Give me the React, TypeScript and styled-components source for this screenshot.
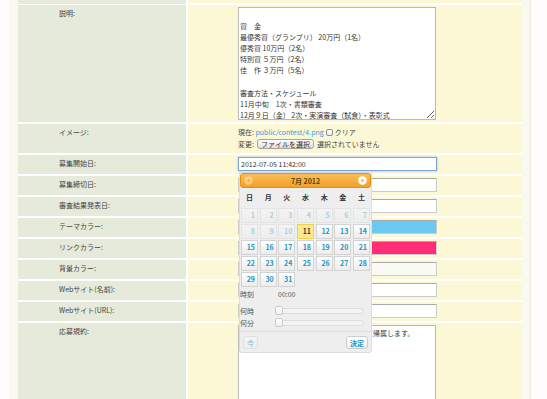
import React from "react";
import styled, { createGlobalStyle, css } from "styled-components";

const GlobalStyle = createGlobalStyle`
  html, body {
    margin: 0;
    padding: 0;
    overflow: hidden;
    background: #fefdfb;
  }
  body {
    font-family: "Noto Sans CJK JP", "Noto Sans", sans-serif;
    font-size: 7px;
    color: #444;
  }
`;

const Page = styled.div`
  margin-left: 9px;
  width: 522px;
  height: 399px;
  overflow: hidden;
  padding: 0 9px;
  box-sizing: border-box;
  background: #fbf8f1;
  border-right: 1px solid #f2ede4;
`;

const Table = styled.div`
  display: grid;
  grid-template-columns: 168px 334px;
  grid-template-rows: 3px 117px 29px repeat(8, 19px) 120px;
  gap: 2px;
  background: #ffffff;
  width: 504px;
`;

const Label = styled.div`
  background: #e6eada;
  padding: 4px 0 0 41px;
  line-height: 9px;
  color: #444;
  white-space: nowrap;
`;

const Value = styled.div`
  position: relative;
  background: #fcf8d6;
  padding: 2px 0 0 50px;
`;

const TextInput = styled.input<{ $fill?: string; $focus?: boolean }>`
  display: block;
  width: 199px;
  height: 14px;
  box-sizing: border-box;
  margin: 0;
  padding: 0 2px;
  border: 1px solid #cbcbcb;
  border-top-color: #aaaaaa;
  background: ${(p) => p.$fill || "#ffffff"};
  font-family: inherit;
  font-size: 7px;
  color: #333;
  outline: none;
  ${(p) =>
    p.$focus &&
    css`
      border-color: #7aa8d8;
      box-shadow: 0 0 2px #8cbbe9;
    `}
`;

const TextArea = styled.textarea<{ $h: number }>`
  display: block;
  width: 198px;
  height: ${(p) => p.$h}px;
  box-sizing: border-box;
  margin: 0;
  padding: 2px 1px 0;
  border: 1px solid #b9b9b9;
  background: #fff;
  font-family: inherit;
  font-size: 7px;
  line-height: 11.1px;
  color: #333;
  overflow: hidden;
  outline: none;
`;

const ImageLine = styled.div`
  display: flex;
  align-items: center;
  height: 12px;
  line-height: 12px;
  white-space: nowrap;
  color: #444;
`;

const Link = styled.a`
  color: #3a9ad9;
  text-decoration: none;
`;

const Check = styled.input`
  appearance: none;
  width: 7px;
  height: 7px;
  margin: 0 2px 0 2px;
  box-sizing: border-box;
  border: 1px solid #8f8f8f;
  border-radius: 2px;
  background: linear-gradient(#ffffff, #ececec);
`;

const FileButton = styled.button`
  height: 10px;
  margin: 0 3px;
  padding: 0 3px;
  line-height: 8px;
  border: 1px solid #a3a3a3;
  border-radius: 3px;
  background: linear-gradient(#ffffff, #dedede);
  font-family: inherit;
  font-size: 7px;
  color: #333;
`;

/* datepicker */

const Popup = styled.div`
  position: absolute;
  left: 51px;
  top: 17px;
  z-index: 5;
  width: 133px;
  box-sizing: border-box;
  background: #eeeeee;
  border: 1px solid #dddddd;
  border-radius: 0 0 3px 3px;
`;

const Header = styled.div`
  height: 15px;
  box-sizing: border-box;
  display: flex;
  align-items: center;
  justify-content: space-between;
  padding: 0 3px;
  border: 1px solid #e78f08;
  border-radius: 3px;
  background: linear-gradient(#f9be58, #f3a127);
  font-weight: bold;
  color: #5b3e14;
`;

const WeekRow = styled.div`
  display: grid;
  grid-template-columns: repeat(7, 1fr);
  column-gap: 1.67px;
  height: 18px;
  align-items: center;
  padding: 0 1px;
  text-align: center;
  font-weight: bold;
  color: #333;
`;

const Days = styled.div`
  display: grid;
  grid-template-columns: repeat(7, 1fr);
  grid-auto-rows: 15px;
  column-gap: 1.67px;
  row-gap: 1px;
  margin-top: 2px;
  padding: 0 1px;
`;

const Day = styled.div<{ $state?: "off" | "today" }>`
  box-sizing: border-box;
  border: 1px solid #d3d3d3;
  background: linear-gradient(#ffffff, #ececec);
  text-align: right;
  padding-right: 2px;
  line-height: 13px;
  font-weight: bold;
  color: #1c94c4;
  ${(p) => p.$state === "off" && css`opacity: 0.35;`}
  ${(p) =>
    p.$state === "today" &&
    css`
      border-color: #f3cf4f;
      background: #fce993;
      color: #363636;
    `}
`;

const TimeRow = styled.div<{ $mt: number }>`
  display: flex;
  align-items: center;
  height: 10px;
  margin-top: ${(p) => p.$mt}px;
  color: #555;
`;

const TimeLabel = styled.span<{ $w: number }>`
  width: ${(p) => p.$w}px;
`;

const Track = styled.div`
  position: relative;
  width: 89px;
  height: 6px;
  box-sizing: border-box;
  border: 1px solid #dddddd;
  border-radius: 3px;
  background: #f3f3f3;
`;

const Handle = styled.span`
  position: absolute;
  left: -1px;
  top: -3px;
  width: 8px;
  height: 9px;
  box-sizing: border-box;
  border: 1px solid #cccccc;
  border-radius: 2px;
  background: linear-gradient(#ffffff, #efefef);
`;

const ButtonBar = styled.div`
  display: flex;
  justify-content: space-between;
  margin-top: 3px;
  padding: 4px 3px 3px;
  border-top: 1px solid #dddddd;
`;

const PickerButton = styled.button<{ $faded?: boolean; $w: number }>`
  width: ${(p) => p.$w}px;
  height: 13px;
  padding: 0;
  border: 1px solid #cccccc;
  border-radius: 3px;
  background: linear-gradient(#ffffff, #f0f0f0);
  font-family: inherit;
  font-size: 7px;
  font-weight: bold;
  color: #1c94c4;
  ${(p) => p.$faded && css`opacity: 0.4;`}
`;

function NavIcon({ dir, faded }: { dir: "prev" | "next"; faded?: boolean }) {
  return (
    <svg width="9" height="9" viewBox="0 0 9 9" style={{ opacity: faded ? 0.35 : 1 }}>
      <circle cx="4.5" cy="4.5" r="4.3" fill="#ffffff" />
      {dir === "next" ? (
        <path d="M3.6 2.6 L5.8 4.5 L3.6 6.4 Z" fill="#f29a1f" />
      ) : (
        <path d="M5.4 2.6 L3.2 4.5 L5.4 6.4 Z" fill="#f29a1f" />
      )}
    </svg>
  );
}

const weekdays = ["日", "月", "火", "水", "木", "金", "土"];

function DatePicker() {
  const days = Array.from({ length: 31 }, (_, i) => i + 1);
  return (
    <Popup>
      <Header>
        <NavIcon dir="prev" faded />
        <span>7月 2012</span>
        <NavIcon dir="next" />
      </Header>
      <WeekRow>
        {weekdays.map((w) => (
          <span key={w}>{w}</span>
        ))}
      </WeekRow>
      <Days>
        {days.map((d) => (
          <Day key={d} $state={d < 11 ? "off" : d === 11 ? "today" : undefined}>
            {d}
          </Day>
        ))}
      </Days>
      <TimeRow $mt={2}>
        <TimeLabel $w={38}>時刻</TimeLabel>
        <span>00:00</span>
      </TimeRow>
      <TimeRow $mt={7}>
        <TimeLabel $w={35}>何時</TimeLabel>
        <Track>
          <Handle />
        </Track>
      </TimeRow>
      <TimeRow $mt={2}>
        <TimeLabel $w={35}>何分</TimeLabel>
        <Track>
          <Handle />
        </Track>
      </TimeRow>
      <ButtonBar>
        <PickerButton $faded $w={15}>今</PickerButton>
        <PickerButton $w={22}>決定</PickerButton>
      </ButtonBar>
    </Popup>
  );
}

const description = [
  "",
  "賞　金",
  "最優秀賞（グランプリ） 20万円（1名）",
  "優秀賞 10万円（2名）",
  "特別賞 ５万円（2名）",
  "佳　作 ３万円（5名）",
  "",
  "審査方法・スケジュール",
  "11月中旬　1次・書類審査",
  "12月９日（金） 2次・実演審査（試食）・表彰式",
  "",
].join("\n");

const simpleRows: { label: string; fill?: string }[] = [
  { label: "募集締切日:" },
  { label: "審査結果発表日:" },
  { label: "テーマカラー:", fill: "#69c9f1" },
  { label: "リンクカラー:", fill: "#ff2c76" },
  { label: "背景カラー:", fill: "#fbfaf2" },
  { label: "Webサイト(名前):" },
  { label: "Webサイト(URL):" },
];

export default function App() {
  return (
    <>
      <GlobalStyle />
      <Page>
        <Table>
          <Label />
          <Value />

          <Label>説明:</Label>
          <Value>
            <TextArea $h={113} readOnly value={description} />
          </Value>

          <Label>イメージ:</Label>
          <Value>
            <ImageLine>
              現在:&nbsp;<Link href="#">public/contest/4.png</Link>
              <Check type="checkbox" />
              クリア
            </ImageLine>
            <ImageLine>
              変更:<FileButton type="button">ファイルを選択</FileButton>選択されていません
            </ImageLine>
          </Value>

          <Label>募集開始日:</Label>
          <Value>
            <TextInput $focus readOnly value="2012-07-05 11:42:00" />
            <DatePicker />
          </Value>

          {simpleRows.map((r) => (
            <React.Fragment key={r.label}>
              <Label>{r.label}</Label>
              <Value>
                <TextInput readOnly $fill={r.fill} value="" />
              </Value>
            </React.Fragment>
          ))}

          <Label>応募規約:</Label>
          <Value>
            <TextArea
              $h={110}
              readOnly
              value="応募作品の著作権・使用権は全て主催者に帰属します。"
            />
          </Value>
        </Table>
      </Page>
    </>
  );
}
